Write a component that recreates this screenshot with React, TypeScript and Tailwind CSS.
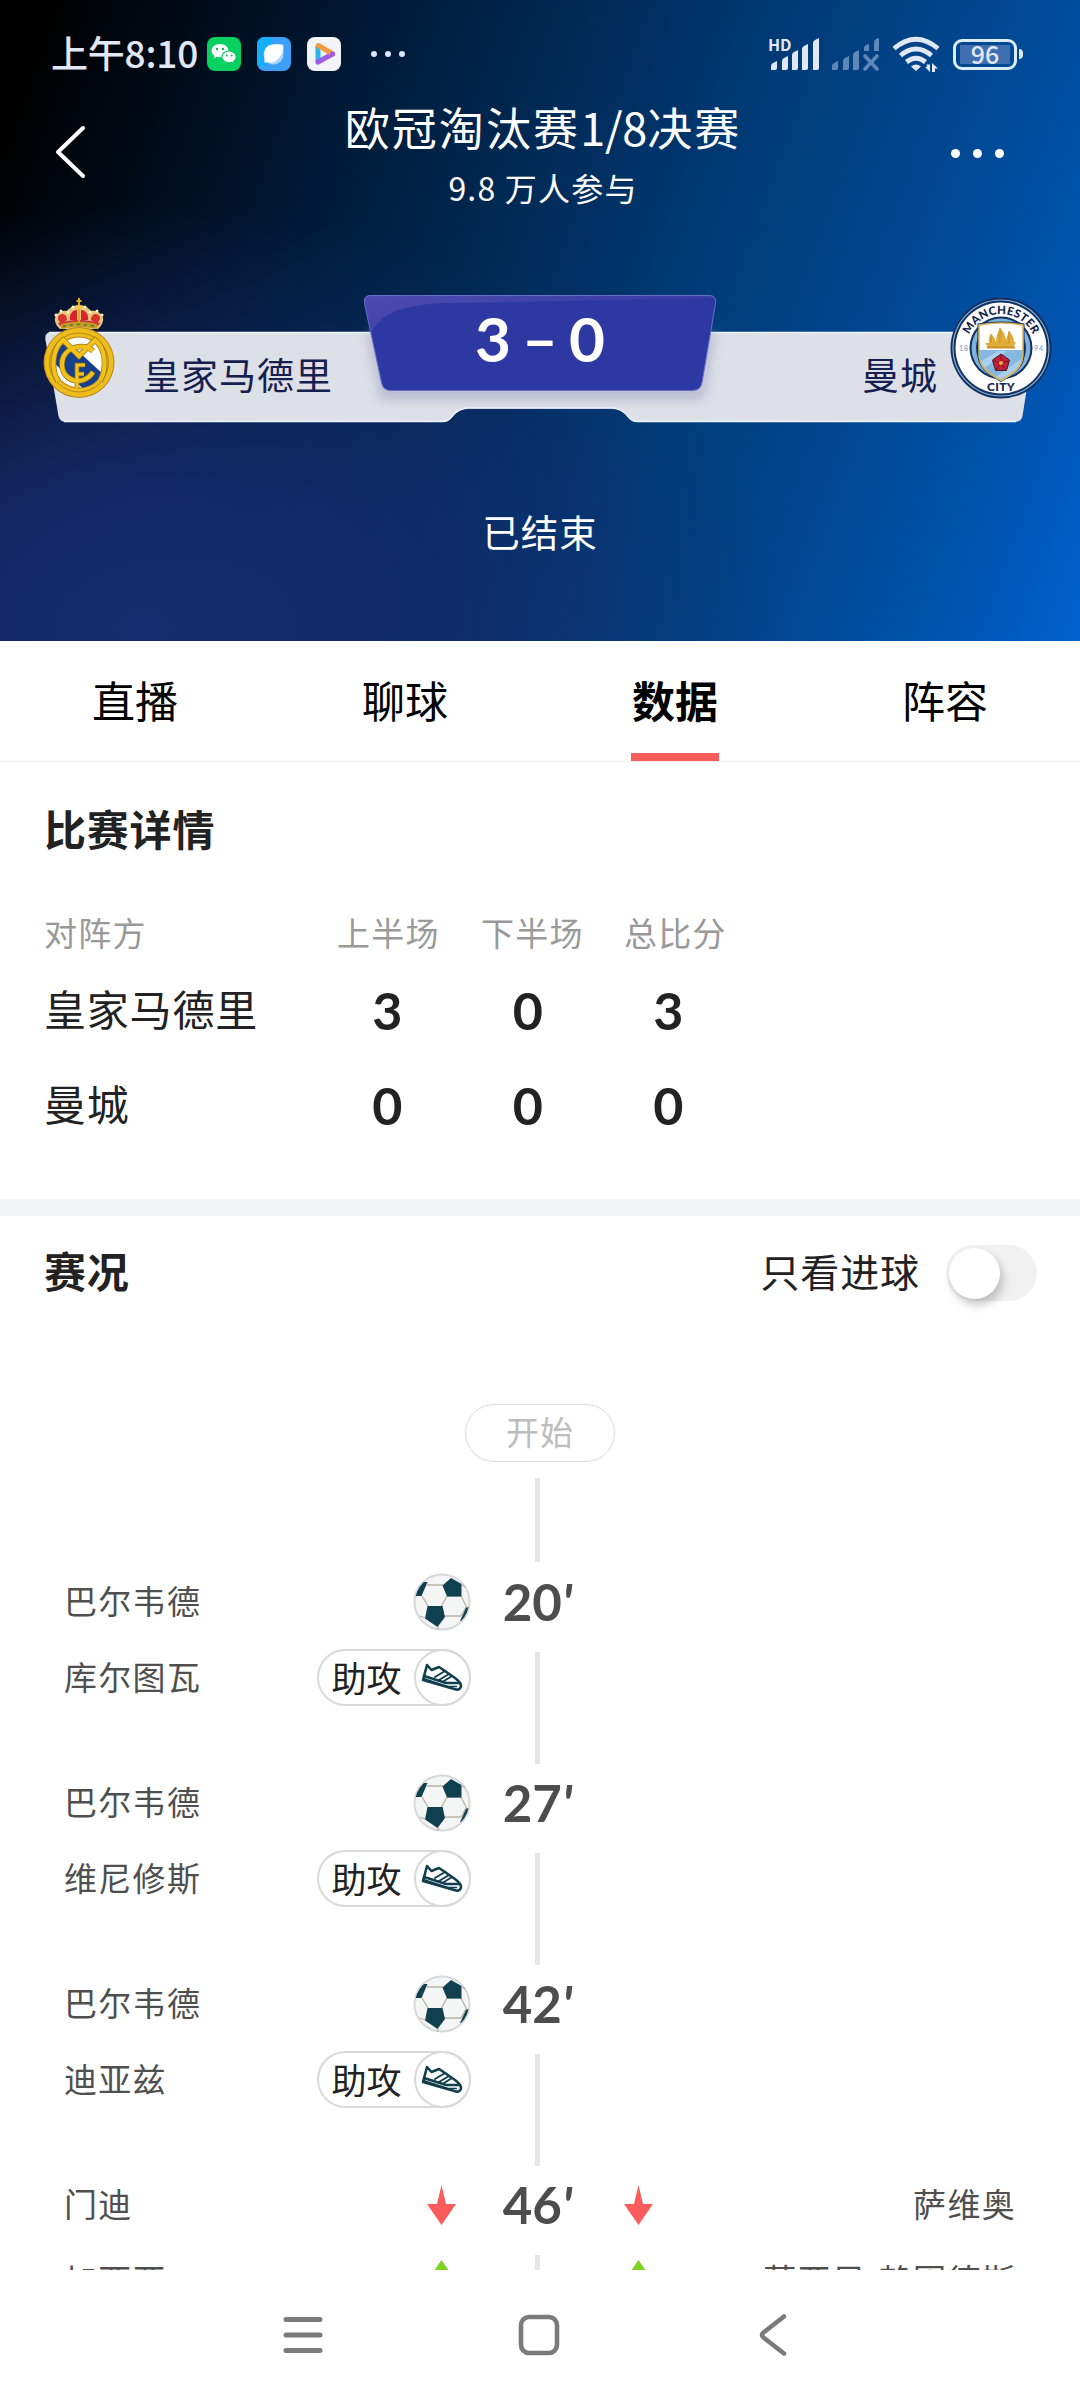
import { clsx } from "clsx";

type MatchEvent = {
  minute: string;
  left: string[];
  right: string[];
  type: "goal" | "sub";
};

const tabs = ["直播", "聊球", "数据", "阵容"];

const scores = [
  { team: "皇家马德里", values: [3, 0, 3] },
  { team: "曼城", values: [0, 0, 0] },
];

const events: MatchEvent[] = [
  { minute: "20", left: ["巴尔韦德", "库尔图瓦"], right: [], type: "goal" },
  { minute: "27", left: ["巴尔韦德", "维尼修斯"], right: [], type: "goal" },
  { minute: "42", left: ["巴尔韦德", "迪亚兹"], right: [], type: "goal" },
  { minute: "46", left: ["门迪", "加西亚"], right: ["萨维奥", "蒂亚尼-赖因德斯"], type: "sub" },
];

function Signal({ className, broken }: { className?: string; broken?: boolean }) {
  return (
    <svg width="50" height="34" viewBox="0 0 50 34" className={className} fill="currentColor">
      <path d="M1 33v-4q0-2 2-3l4-2v7q0 2-2 2z" />
      <path d="M12 33V24q0-2 2-3l4-2v12q0 2-2 2z" />
      <path d="M22 33V18q0-2 2-3l4-2v18q0 2-2 2z" />
      {broken ? (
        <>
          <path d="M33 14v-3q0-2 2-3l3-1v7z" />
          <path d="M43 14V5q0-2 2-3l3-1v13z" />
          <path d="M34 19l12 13M46 19L34 32" stroke="currentColor" strokeWidth="3.6" strokeLinecap="round" />
        </>
      ) : (
        <>
          <path d="M32 33V12q0-2 2-3l4-2v24q0 2-2 2z" />
          <path d="M43 33V6q0-2 2-3l4-2v30q0 2-2 2z" />
        </>
      )}
    </svg>
  );
}

function StatusBar() {
  return (
    <div className="flex h-[108px] items-center justify-between pl-[51px] pr-[57px] text-[#e1e7f5]">
      <div className="flex items-center">
        <span className="w-[156px] whitespace-nowrap text-[37px] leading-none font-medium tracking-[-0.200px] -translate-y-[2px]">
          上午8:10
        </span>
        {/* notifications */}
        <svg width="34" height="34" viewBox="0 0 34 34">
          <rect width="34" height="34" rx="8" fill="#07d160" />
          <path d="M13 7c-5 0-8.400 3-8.400 6.700 0 2.100 1.100 3.900 2.900 5.100l-.7 2.500 2.900-1.500c1 .3 2.100.4 3.300.4 5 0 8.400-3 8.400-6.500S18 7 13 7z" fill="#fff" />
          <path d="M22 14c-4.100 0-7.200 2.600-7.200 5.900s3.100 5.900 7.200 5.900c1 0 2-.2 2.800-.5l2.500 1.400-.6-2.300c1.600-1.100 2.500-2.700 2.500-4.500 0-3.300-3.100-5.900-7.200-5.900z" fill="#fff" stroke="#07d160" strokeWidth="1.200" />
          <g fill="#07b556">
            <circle cx="10" cy="12" r="1.200" />
            <circle cx="16" cy="12" r="1.200" />
            <circle cx="19.700" cy="18.500" r="1" />
            <circle cx="24.600" cy="18.500" r="1" />
          </g>
        </svg>
        <svg width="34" height="34" viewBox="0 0 34 34" className="ml-4">
          <rect width="34" height="34" rx="8" fill="#3c9ffa" />
          <path d="M0 26V8q0-8 8-8h8L8 30H4q-4-1-4-4z" fill="#14aefb" />
          <path d="M17 7.500h9.500V17A10 10 0 1 1 17 7.500z" fill="#a9d4fb" />
          <path d="M16 7.500c4-.5 8 0 10 1 .5 7-3 14-10 17H7.500V16c0-5 4-8.500 8.500-8.500z" fill="#fff" />
        </svg>
        <svg width="34" height="34" viewBox="0 0 34 34" className="ml-4">
          <rect width="34" height="34" rx="8" fill="#f3f4f8" />
          <path d="M11 9v16" stroke="#2cb3e8" strokeWidth="5" strokeLinecap="round" />
          <path d="M11 25l14.500-8" stroke="#a05be8" strokeWidth="5" strokeLinecap="round" />
          <path d="M11.500 8.500L25 16.500" stroke="#f59a3e" strokeWidth="5" strokeLinecap="round" />
          <circle cx="25.500" cy="17" r="2.500" fill="#a05be8" />
        </svg>
        <div className="ml-[30px] flex gap-2">
          <i className="h-[6px] w-[6px] rounded-full bg-[#dbe6ff]" />
          <i className="h-[6px] w-[6px] rounded-full bg-[#dbe6ff]" />
          <i className="h-[6px] w-[6px] rounded-full bg-[#dbe6ff]" />
        </div>
      </div>
      <div className="flex items-center">
        <div className="relative">
          <span className="absolute -left-[2px] -top-[1px] text-[16px] leading-none font-bold">HD</span>
          <Signal />
        </div>
        <Signal broken className="ml-[11px] text-[#5f87b8]" />
        <svg width="48" height="36" viewBox="0 0 48 36" className="ml-[11px]" fill="none" stroke="currentColor" strokeWidth="4.800">
          <path d="M2 12.500q22-18.500 44 0" />
          <path d="M8.500 19.500q15.500-13 31 0" />
          <path d="M14.500 26q9.500-7.500 19 0" />
          <path d="M24 35l-5-4.500q5-4 10 0z" fill="currentColor" stroke="none" />
          <path d="M34.500 28.500h3.500v7.500l-5-5h2zM40 36v-9l6 5.500h-3V36z" fill="currentColor" stroke="none" />
        </svg>
        <div className="ml-[13px] flex h-[31px] w-[64px] items-center justify-center rounded-[9px] border-[3px] border-[#dcecfb] p-[4px]">
          <div className="flex h-[19px] w-full items-center justify-center bg-[#3f6fb1] text-[25px] leading-none font-medium">
            <span className="-translate-y-[1px]">96</span>
          </div>
        </div>
        <i className="ml-[2px] h-[10px] w-[4px] rounded-r bg-[#dcecfb]" />
      </div>
    </div>
  );
}

function MadridCrest() {
  return (
    <svg width="72" height="104" viewBox="0 0 72 104">
      <defs>
        <clipPath id="madrid">
          <circle cx="36" cy="66" r="25" />
        </clipPath>
      </defs>
      {/* crown */}
      <path d="M17 32c-5-4-7-11-3-15 3-3 7-4 10-3 3-4 8-6 12-6s9 2 12 6c3-1 7 0 10 3 4 4 2 11-3 15z" fill="#e5c67a" />
      <path d="M16 24c-2-3-1-6 3-7 3 0 5 2 5 6l-6 4zM56 24c2-3 1-6-3-7-3 0-5 2-5 6l6 4z" fill="#d8322c" />
      <path d="M27 23c-1-5 2-10 7-10v11zM45 23c1-5-2-10-7-10v11z" fill="#d8232c" />
      <path d="M15 26q21-6 42 0l-2 3q-19-5-38 0z" fill="#cf3040" />
      <g fill="#fff3c8">
        <circle cx="13" cy="18" r="1.500" />
        <circle cx="18" cy="14" r="1.500" />
        <circle cx="25" cy="15" r="1.500" />
        <circle cx="30" cy="10" r="1.500" />
        <circle cx="42" cy="10" r="1.500" />
        <circle cx="47" cy="15" r="1.500" />
        <circle cx="54" cy="14" r="1.500" />
        <circle cx="59" cy="18" r="1.500" />
      </g>
      <path d="M36 1v24M33.500 4h5" stroke="#e2a91f" strokeWidth="2" />
      <circle cx="36" cy="10" r="2.500" fill="#efc53a" />
      <path d="M18 27q18-5 36 0v5q-18-4-36 0z" fill="#c79a22" />
      <path d="M20 29.500q16-4 32 0" stroke="#3f7c4a" strokeWidth="1.500" strokeDasharray="3 4" fill="none" />
      {/* roundel */}
      <circle cx="36" cy="65.500" r="35.500" fill="#b6851d" />
      <circle cx="36" cy="65.500" r="34.500" fill="#edbd1b" />
      <circle cx="36" cy="65.500" r="29.500" fill="none" stroke="#b6851d" strokeWidth="1" />
      <circle cx="36" cy="65.500" r="26" fill="#b6851d" />
      <circle cx="36" cy="65.500" r="25" fill="#fff" />
      <g clipPath="url(#madrid)">
        <path d="M6 62L22 42 72 88 50 100z" fill="#17408b" />
      </g>
      {[
        { color: "#94701d", width: 5.6 },
        { color: "#f2c21b", width: 4.2 },
      ].map((s) => (
        <g key={s.color} fill="none" stroke={s.color} strokeWidth={s.width}>
          <path d="M15 84C7 70 10 52 20 43l16 16 16-16c10 8 13 27 5 41" />
          <path d="M50 54c-9-9-30-4-31 12-1 19 22 24 31 9" />
          <path d="M34 91V68h8M34 77h7" strokeWidth={s.width - 1} />
        </g>
      ))}
    </svg>
  );
}

function CityCrest() {
  return (
    <svg width="102" height="104" viewBox="0 0 102 104">
      <defs>
        <path id="city-top" d="M16 52a35 35 0 0 1 70 0" />
        <clipPath id="city-shield">
          <path d="M29 28q22-4 44 0v30c0 13-10 20-22 26-12-6-22-13-22-26z" />
        </clipPath>
      </defs>
      <circle cx="51" cy="51" r="50.500" fill="#14305e" />
      <circle cx="51" cy="51" r="48" fill="none" stroke="#7fb2dd" strokeWidth="1.200" />
      <circle cx="51" cy="51" r="45.500" fill="#fff" />
      <circle cx="51" cy="51" r="31.500" fill="#14305e" />
      <circle cx="51" cy="51" r="29.500" fill="#7fb2dd" />
      <circle cx="51" cy="51" r="25" fill="#14305e" />
      <path d="M27.500 26.500q23.500-4 47 0V57c0 14-11 21-23.500 28C38.500 78 27.500 71 27.500 57z" fill="#14305e" />
      <g clipPath="url(#city-shield)">
        <path d="M28 22h46v31H28z" fill="#fff" />
        <path d="M28 53h46v33H28z" fill="#86b9e0" />
        <path d="M28 66l20-12h9L28 76zM40 84l34-24v10L50 88z" fill="#a9cfee" />
      </g>
      <path d="M29 28q22-4 44 0v29c0 13-10 20-22 26-12-6-22-13-22-26z" fill="none" stroke="#d9b45a" strokeWidth="1.500" />
      <path d="M35 46l4 0q-1-5 2-9 3 2 5 8 0-7 4-14 5 5 6 12l3-9q5 5 5 11h2l-3 6H39z" fill="#e2ac3c" />
      <path d="M50 31v15M59 34v12M41 37v9" stroke="#c98e25" strokeWidth="1" />
      <path d="M37 50.500h28" stroke="#c98e25" strokeWidth="2" />
      <path d="M51 57l8.500 6-3 10.500h-11L42.500 63z" fill="#c51f35" stroke="#4b1a35" strokeWidth="1" />
      <path d="M51 58v8l8-2M51 66l5 7M51 66l-5 7M51 66l-8-2" stroke="#6e1830" strokeWidth="1" fill="none" />
      <circle cx="51" cy="66" r="2" fill="#e4b13d" />
      <g fontFamily="Lato, sans-serif" fontWeight="900" fill="#14264f">
        <text fontSize="11.500" textAnchor="middle" letterSpacing="0.200">
          <textPath href="#city-top" startOffset="50%">MANCHESTER</textPath>
        </text>
        <text x="51" y="93.500" fontSize="12" textAnchor="middle" letterSpacing="0.300">CITY</text>
      </g>
      <g fontFamily="Lato, sans-serif" fontSize="7" fill="#6f95c2">
        <text x="9" y="54">18</text>
        <text x="84" y="54">94</text>
      </g>
    </svg>
  );
}

function Scoreboard() {
  return (
    <div className="relative mt-[70px] h-[140px]">
      <svg className="absolute inset-0" width="1080" height="140" viewBox="0 0 1080 140">
        <defs>
          <linearGradient id="score" x1="0" y1="0" x2="0.350" y2="0.500">
            <stop offset="0" stopColor="#4f4db2" />
            <stop offset="1" stopColor="#383ba5" />
          </linearGradient>
          <clipPath id="score-clip">
            <path d="M371 5h338q8 0 6.500 8l-13.500 79q-1.500 8-9 8H390q-7 0-8.500-8L364.500 13q-1.500-8 6.500-8z" />
          </clipPath>
          <filter id="score-shadow" x="-10%" y="-20%" width="120%" height="160%">
            <feGaussianBlur stdDeviation="6" />
          </filter>
        </defs>
        <path
          d="M52 42h976q8 0 6.500 8l-12 76q-1 6-8 6H638q-5 0-9-5-6-8-16-8.500H468q-10 .5-16 8.500-4 5-9 5H66q-6 0-7.500-6L45.500 50q-1.500-8 6.500-8z"
          fill="#dee0e8"
        />
        <path d="M49 42.500h982M64 131.500h379q5 0 9-5 6-8 16-8.500h144q10 .5 16 8.500 4 5 9 5h379" stroke="#eef5ff" strokeWidth="1.500" fill="none" />
        <path d="M366 42h350l-12 68H380z" fill="#8f90b8" opacity="0.450" filter="url(#score-shadow)" />
        <g clipPath="url(#score-clip)">
          <path d="M360 0h370v110H360z" fill="url(#score)" />
          <path d="M368 110V55C372 25 400 14 450 13L730 8v102z" fill="#2d38a3" />
        </g>
        <path d="M371 5.500h338q8 0 6.500 8l-13.500 79q-1.500 8-9 8H390q-7 0-8.500-8L364.500 13.500q-1.500-8 6.500-8z" fill="none" stroke="#6470c4" strokeWidth="1" />
      </svg>
      <div className="relative flex h-full text-[37px] leading-none tracking-[1px] text-[#16204f]">
        <div className="flex w-[364px] pl-[43px]">
          <div className="pt-[7px]">
            <MadridCrest />
          </div>
          <span className="ml-[28px] pt-[66px]">皇家马德里</span>
        </div>
        <div className="w-[352px] pt-[17px] text-center font-[Lato] text-[62px] font-bold tracking-normal text-white">
          <span className="[word-spacing:-4px]">3 – 0</span>
        </div>
        <div className="flex flex-1 justify-end pr-[28px]">
          <span className="mr-[12px] pt-[66px]">曼城</span>
          <div className="pt-[7px]">
            <CityCrest />
          </div>
        </div>
      </div>
    </div>
  );
}

function Header() {
  return (
    <header className="h-[641px] bg-[radial-gradient(ellipse_60%_66%_at_13%_98%,#172c6e_0%,#162b6cdd_35%,#162b6c00_100%),linear-gradient(110deg,#000_4%,#00142c_24%,#002750_42%,#003a75_60%,#004790_76%,#0054b0_90%,#0062cf_100%)] text-white">
      <StatusBar />
      <div className="flex h-[112px] items-start justify-between pl-[54px] pr-[76px]">
        <svg width="34" height="54" viewBox="0 0 34 54" className="mt-[17px]" fill="none" stroke="#fff" strokeWidth="4" strokeLinecap="round" strokeLinejoin="round">
          <path d="M29 3L4 27l25 24" />
        </svg>
        <div className="flex flex-col items-center pl-[47px]">
          <h1 className="mt-[-4px] text-[45px] leading-none tracking-[2.100px] whitespace-nowrap">
            欧冠淘汰赛<span className="tracking-[-0.200px]">1/8</span>决赛
          </h1>
          <p className="mt-[22px] text-[32px] leading-none tracking-[1.200px]">9.8 万人参与</p>
        </div>
        <div className="mt-[41px] flex gap-[13px]">
          <i className="h-[9px] w-[9px] rounded-full bg-white" />
          <i className="h-[9px] w-[9px] rounded-full bg-white" />
          <i className="h-[9px] w-[9px] rounded-full bg-white" />
        </div>
      </div>
      <Scoreboard />
      <p className="mt-[82px] text-center text-[37.500px] leading-none tracking-[1px]">已结束</p>
    </header>
  );
}

function Ball() {
  return (
    <svg width="58" height="58" viewBox="0 0 58 58">
      <defs>
        <clipPath id="ball">
          <circle cx="29" cy="29" r="27" />
        </clipPath>
      </defs>
      <circle cx="29" cy="29" r="27.500" fill="#f4f5f5" stroke="#d6d8da" strokeWidth="2" />
      <path d="M14 12h16M9 23l6 10M34 23l-6 11M34 23h14M31 43h17M53 34l-5 9M12 45l-5-2M25 54v3M49 12l3 2M48 23l6 12" stroke="#b9b3a5" strokeWidth="1.300" fill="none" />
      <g fill="#103f4f" clipPath="url(#ball)">
        <path d="M29.500 12.500L38 5l10.500 6v12.500H34z" />
        <path d="M14.500 33h15l2.500 11-7.500 10L12 45.500z" />
        <path d="M8 9l6.500 0-6 14H0z" />
        <path d="M53 35l5-2v14l-11 1z" />
      </g>
    </svg>
  );
}

function Assist() {
  return (
    <div className="flex h-[57px] w-[154px] items-center justify-between rounded-full border-2 border-[#d9d9d9] bg-white pl-[13px]">
      <span className="text-[35px] leading-none whitespace-nowrap text-[#222] -translate-y-[1px]">助攻</span>
      <span className="-mr-[2px] flex h-[57px] w-[57px] shrink-0 items-center justify-center rounded-full border-2 border-[#d9d9d9]">
        <svg width="42" height="29" viewBox="0 0 42 29" fill="none" stroke="#123f4e" strokeWidth="2.600" strokeLinejoin="round" strokeLinecap="round">
          <path d="M6 2l4.500 5L18 4l6 4 10 7c4 3 6 5 6 8 0 2-2 4-5 3.500L2 17z" />
          <path d="M3 13l22 7h14" />
          <path d="M2.500 15.500l24 8h9" strokeWidth="1.500" />
          <path d="M14 14l10-6M18 17l10-6M23 18l8-5" strokeWidth="2" />
        </svg>
      </span>
    </div>
  );
}

function Arrow({ up }: { up?: boolean }) {
  return (
    <svg width="29" height="40" viewBox="0 0 29 40" className={clsx(up ? "rotate-180 text-[#7ed321]" : "text-[#fa5c5c]")} fill="currentColor">
      <path d="M14.500 0l4.500 19h10L14.500 40 0 19h10z" />
    </svg>
  );
}

function Side({ names, type, reverse }: { names: string[]; type: MatchEvent["type"]; reverse?: boolean }) {
  return (
    <div className="flex flex-col">
      {names.map((name, index) => (
        <div key={name} className={clsx("flex h-[75.500px] items-center justify-between", reverse ? "flex-row-reverse" : "pr-px")}>
          <span className="text-[33px] leading-none tracking-[1.300px] whitespace-nowrap text-[#4f4f4f] -translate-y-[1px]">{name}</span>
          {type === "goal" ? (
            index === 0 ? <Ball /> : <Assist />
          ) : (
            <div className="px-[15px]">
              <Arrow up={index === 1} />
            </div>
          )}
        </div>
      ))}
    </div>
  );
}

function Timeline() {
  return (
    <div className="flex flex-1 flex-col overflow-hidden px-16">
      {/* coup d'envoi */}
      <div className="flex flex-col items-center">
        <div className="flex h-[58px] w-[150px] items-center justify-center rounded-full border border-[#dcdcdc] text-[33px] leading-none tracking-[1px] text-[#bdbdbd]">
          <span className="-translate-y-[2px]">开始</span>
        </div>
        <i className="mt-4 mr-[5px] h-[84px] w-[5px] bg-[#e5e5e5]" />
      </div>
      <div className="mt-[2px]">
        {events.map((event) => (
          <div key={event.minute} className="grid h-[201px] grid-cols-[1fr_137px_1fr]">
            <Side names={event.left} type={event.type} />
            <div className="flex flex-col items-center">
              <span className="flex h-[88px] items-center pr-[5px] pb-[14px] font-[Lato] text-[51px] leading-none font-bold text-[#4d4d4d]">
                {event.minute}
                <span className="italic">'</span>
              </span>
              <i className="mr-[5px] h-[112px] w-[5px] bg-[#e5e5e5]" />
            </div>
            <Side names={event.right} type={event.type} reverse />
          </div>
        ))}
      </div>
    </div>
  );
}

export default function App() {
  return (
    <div className="flex h-[2400px] w-[1080px] flex-col overflow-hidden bg-white font-['Noto_Sans_CJK_SC',sans-serif] text-[#222]">
      <Header />

      <nav className="grid h-[121px] grid-cols-4 border-b border-[#f0f0f0] text-[43px] leading-none text-black">
        {tabs.map((tab) => (
          <div key={tab} className="flex flex-col items-center justify-between pt-[37px]">
            <span className={clsx(tab === "数据" && "font-bold")}>{tab}</span>
            <i className={clsx("h-2 w-[88px]", tab === "数据" && "bg-[#fa5c5c]")} />
          </div>
        ))}
      </nav>

      {/* les scores par mi-temps */}
      <section className="h-[437px] px-[44px] pt-[45px]">
        <h2 className="text-[42px] leading-none font-bold tracking-[0.800px]">比赛详情</h2>
        <div className="mt-[67px] flex text-[33px] leading-none tracking-[1.200px] text-[#999]">
          <span className="w-[293px]">对阵方</span>
          <span className="w-[144px]">上半场</span>
          <span className="w-[143px]">下半场</span>
          <span>总比分</span>
        </div>
        <div className="mt-[13px]">
          {scores.map((row) => (
            <div key={row.team} className="flex h-[95px] items-center">
              <span className="w-[273px] text-[42px] leading-none tracking-[0.800px] -translate-y-[2px]">{row.team}</span>
              {row.values.map((value, index) => (
                <span key={index} className="w-[140.500px] text-center font-[Lato] text-[52px] leading-none font-bold">
                  {value}
                </span>
              ))}
            </div>
          ))}
        </div>
      </section>
      <div className="h-[17px] bg-[#f2f4f7]" />

      <div className="flex h-[188px] items-start justify-between pl-[44px] pr-[43px]">
        <h2 className="pt-[33px] text-[42px] leading-none font-bold tracking-[0.800px]">赛况</h2>
        <div className="flex items-center pt-[29px]">
          <span className="text-[39px] leading-none tracking-[0.900px] -translate-y-[3px]">只看进球</span>
          <div className="ml-[26px] flex h-[56px] w-[91px] items-center rounded-full bg-[#f1f1f1] px-[3px]">
            <i className="h-[51px] w-[51px] rounded-full bg-white shadow-[3px_6px_10px_rgba(0,0,0,0.220)]" />
          </div>
        </div>
      </div>

      <Timeline />

      <footer className="flex h-[130px] shrink-0 justify-center gap-[195px] bg-white pt-[42px] pr-[3px] text-[#7b7b7b]">
        <svg width="40" height="46" viewBox="0 0 40 46" stroke="currentColor" strokeWidth="5" strokeLinecap="round">
          <path d="M3 7.500h34M3 23h34M3 38.500h34" />
        </svg>
        <svg width="42" height="46" viewBox="0 0 42 46" fill="none" stroke="currentColor" strokeWidth="4.600">
          <rect x="3" y="5" width="36" height="36" rx="8" />
        </svg>
        <svg width="40" height="46" viewBox="0 0 40 46" fill="none" stroke="currentColor" strokeWidth="4.600" strokeLinecap="round" strokeLinejoin="round">
          <path d="M29 4.500L8.500 20.500q-3 2.500 0 5L29 41.500" />
        </svg>
      </footer>
    </div>
  );
}
